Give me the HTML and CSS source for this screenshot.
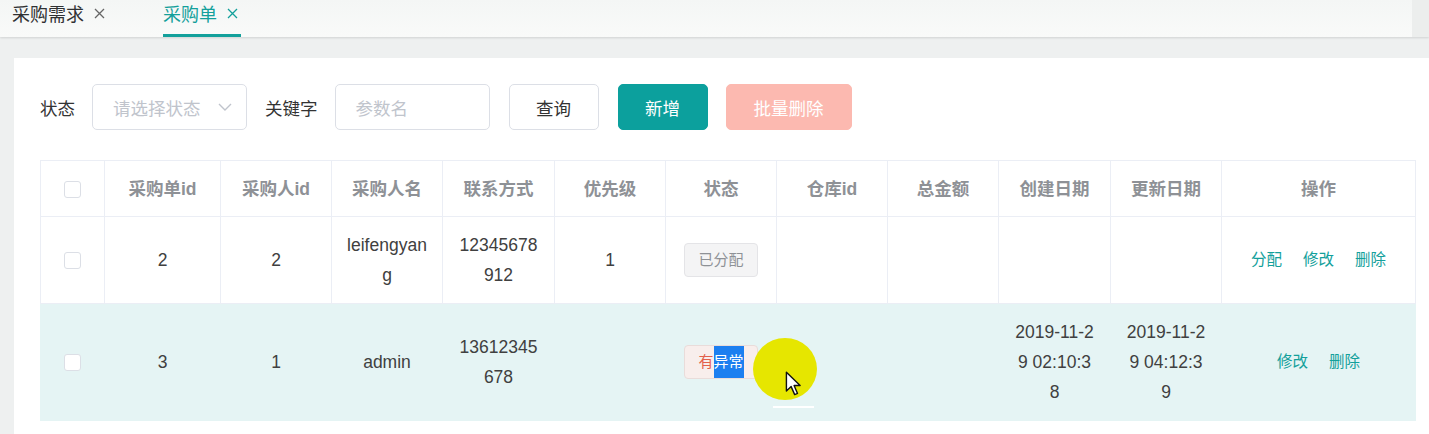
FILE: index.html
```html
<!DOCTYPE html>
<html lang="zh-CN">
<head>
<meta charset="utf-8">
<title>采购单</title>
<link rel="stylesheet" href="styles.css">
</head>
<body>
<div class="tabbar">
  <div class="tab"><span>采购需求</span><svg class="x" width="11" height="11" viewBox="0 0 11 11"><path d="M1 1L10 10M10 1L1 10"/></svg></div>
  <div class="tab active"><span>采购单</span><svg class="x" width="11" height="11" viewBox="0 0 11 11"><path d="M1 1L10 10M10 1L1 10"/></svg></div>
  <div class="tab-scroll"></div>
</div>
<div class="main">
  <div class="card">
    <div class="toolbar">
      <span class="lbl">状态</span>
      <div class="field select"><span class="ph">请选择状态</span><svg class="chev" width="14" height="8" viewBox="0 0 14 8"><path d="M1 1L7 7L13 1"/></svg></div>
      <span class="lbl">关键字</span>
      <div class="field input"><span class="ph">参数名</span></div>
      <button class="btn">查询</button>
      <button class="btn primary">新增</button>
      <button class="btn danger">批量删除</button>
    </div>
    <div class="table">
      <div class="row head">
        <div class="c first"><span class="cb"></span></div>
        <div class="c">采购单id</div>
        <div class="c">采购人id</div>
        <div class="c">采购人名</div>
        <div class="c wide">联系方式</div>
        <div class="c">优先级</div>
        <div class="c">状态</div>
        <div class="c">仓库id</div>
        <div class="c">总金额</div>
        <div class="c wide">创建日期</div>
        <div class="c">更新日期</div>
        <div class="c">操作</div>
      </div>
      <div class="row">
        <div class="c first"><span class="cb"></span></div>
        <div class="c">2</div>
        <div class="c">2</div>
        <div class="c">leifengyang</div>
        <div class="c wide">12345678912</div>
        <div class="c">1</div>
        <div class="c"><span class="tag info">已分配</span></div>
        <div class="c"></div>
        <div class="c"></div>
        <div class="c wide"></div>
        <div class="c"></div>
        <div class="c ops"><a>分配</a><a>修改</a><a>删除</a></div>
      </div>
      <div class="row hover">
        <div class="c first"><span class="cb"></span></div>
        <div class="c">3</div>
        <div class="c">1</div>
        <div class="c">admin</div>
        <div class="c wide">13612345678</div>
        <div class="c"></div>
        <div class="c"><span class="tag danger">有<span class="sel">异常</span></span></div>
        <div class="c"></div>
        <div class="c"></div>
        <div class="c wide">2019-11-29 02:10:38</div>
        <div class="c">2019-11-29 04:12:39</div>
        <div class="c ops"><a>修改</a><a>删除</a></div>
      </div>
    </div>
  </div>
</div>
<div class="cursor-ring">
  <svg class="pointer" width="17" height="26" viewBox="0 0 14 22"><path d="M1 1L1 17L5 13.2L8 20L10.4 19L7.5 12.3L12.6 12.3Z"/></svg>
</div>
<div class="cursor-line"></div>
</body>
</html>
```

FILE: styles.css
```css
* { box-sizing: border-box; }
html, body { margin: 0; padding: 0; }
body {
  position: relative;
  width: 1429px;
  height: 434px;
  overflow: hidden;
  background: #eef0f0;
  font-family: "Liberation Sans", "Noto Sans CJK SC", sans-serif;
  color: #444;
}

/* tab bar */
.tabbar {
  height: 37px;
  display: flex;
  align-items: stretch;
  padding-left: 12px;
  background: linear-gradient(#f4f6f5, #f9faf9);
  box-shadow: 0 1px 2px rgba(0,0,0,0.12);
  position: relative;
}
.tab {
  display: flex;
  align-items: center;
  gap: 10px;
  height: 37px;
  padding: 0 3px 8px 0;
  margin-right: 55px;
  font-size: 18px;
  color: #303133;
  border-bottom: 3px solid transparent;
}
.tab .x { stroke: #666; stroke-width: 1.3; fill: none; }
.tab.active { color: #13a09b; border-bottom-color: #13a09b; }
.tab.active .x { stroke: #13a09b; }
.tab-scroll {
  margin-left: auto;
  width: 17px;
  background: #eceeed;
}

/* main */
.main { padding: 21px 0 0 14px; }
.card {
  background: #fff;
  padding: 26px 13px 20px 26px;
  height: 376px;
}

.toolbar {
  display: flex;
  align-items: center;
  height: 46px;
  font-size: 17.5px;
}
.lbl { color: #333; margin-right: 17px; }
.field {
  height: 46px;
  width: 155px;
  border: 1px solid #dcdfe6;
  border-radius: 5px;
  display: flex;
  align-items: center;
  padding: 0 14px 0 20px;
  margin-right: 18px;
}
.input { margin-right: 19px; }
.ph { color: #c0c4cc; }
.chev { margin-left: auto; fill: none; stroke: #c0c4cc; stroke-width: 1.4; }
.btn {
  height: 46px;
  width: 90px;
  border: 1px solid #dcdfe6;
  border-radius: 5px;
  background: #fff;
  color: #333;
  font: inherit;
  font-size: 17.5px;
  margin-right: 19px;
  padding: 0;
}
.btn.primary { background: #0ca09d; border-color: #0ca09d; color: #fff; margin-right: 18px; }
.btn.danger {
  width: 126px;
  background: #fcb9b0;
  border-color: #fcb9b0;
  color: #fff;
  margin-right: 0;
}

/* table */
.table {
  margin-top: 30px;
  width: 1376px;
  border-top: 1px solid #ebeef5;
  font-size: 17.5px;
  line-height: 30px;
}
.row {
  display: grid;
  grid-template-columns: 65px 116px 111px 111px 112px 111px 111px 111px 111px 112px 111px 194px;
}
.c {
  display: flex;
  align-items: center;
  justify-content: center;
  text-align: center;
  word-break: break-all;
  padding: 13px 14.5px;
  border-right: 1px solid #ebeef5;
  border-bottom: 1px solid #ebeef5;
  color: #404040;
}
.c.wide { padding-left: 15px; padding-right: 15px; }
.c.first { border-left: 1px solid #ebeef5; }
.head .c {
  padding-top: 13px;
  padding-bottom: 12px;
  color: #8e9196;
  font-weight: bold;
}
.row.hover .c {
  background: #e5f4f4;
  border-color: #e5f4f4;
}
.cb {
  display: block;
  width: 17px;
  height: 17px;
  border: 1px solid #dcdfe6;
  border-radius: 3px;
  background: #fff;
}
.tag {
  display: inline-block;
  height: 34px;
  width: 74px;
  line-height: 32px;
  font-size: 15px;
  border-radius: 4px;
  border: 1px solid #e4e4e7;
  white-space: nowrap;
}
.tag.info { background: #f4f4f5; color: #8e9196; }
.tag.danger { background: #f8eeec; border-color: #e9dcda; color: #e2604c; }
.tag .sel {
  display: inline-block;
  background: #1c7ff0;
  color: #fff;
  line-height: 32px;
}
.ops { gap: 21px; }
.ops a { color: #13a09b; font-size: 15.5px; }

/* screen recorder cursor highlight (overlay) */
.cursor-ring {
  position: absolute;
  left: 753px;
  top: 338px;
  width: 64px;
  height: 62px;
  border-radius: 50%;
  background: #e6e600;
}
.pointer {
  position: absolute;
  left: 32px;
  top: 33px;
  fill: #fff;
  stroke: #111;
  stroke-width: 1.2;
  stroke-linejoin: round;
}
.cursor-line {
  position: absolute;
  left: 773px;
  top: 406px;
  width: 41px;
  height: 2px;
  background: #fff;
}
```
